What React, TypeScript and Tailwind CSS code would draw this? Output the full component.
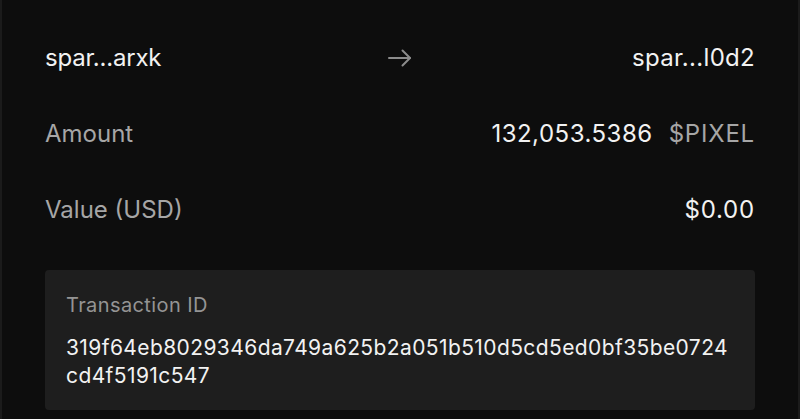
import React from "react";

function Arrow() {
  return (
    <svg width="24" height="18" viewBox="0 0 24 18" fill="none" stroke="#8c8c8c" strokeWidth="2" strokeLinecap="round" strokeLinejoin="round">
      <path d="M1 9h21" />
      <path d="M14.5 1.5 22 9l-7.5 7.5" />
    </svg>
  );
}

function Row({ label, children }: { label: string; children: React.ReactNode }) {
  return (
    <div className="flex h-9 items-center justify-between">
      <span className="text-[#a6a6a6]">{label}</span>
      <div className="flex items-center gap-4">{children}</div>
    </div>
  );
}

export default function App() {
  return (
    <div
      className="h-[419px] w-[800px] overflow-hidden border-x-2 border-[#1b1b1b] bg-[#0d0d0d] px-[43px] pt-10 text-[24px] leading-9 text-[#f2f2f2]"
      style={{ fontFamily: "Inter, 'Liberation Sans', sans-serif" }}
    >
      <div className="grid h-9 grid-cols-[1fr_auto_1fr] items-center">
        <span className="tracking-[-0.2px]">spar...arxk</span>
        <Arrow />
        <span className="text-right tracking-[0.3px]">spar...l0d2</span>
      </div>
      <div className="mt-10 flex flex-col gap-10">
        <Row label="Amount">
          <span className="tracking-[0.5px]">132,053.5386</span>
          <span className="tracking-[0.8px] text-[#a6a6a6]">$PIXEL</span>
        </Row>
        <Row label="Value (USD)">
          <span className="tracking-[0.8px]">$0.00</span>
        </Row>
      </div>
      <div className="mt-[42px] rounded bg-[#1e1e1e] px-[21px] pt-[21px] pb-[20px]">
        <div className="text-[20px] leading-7 tracking-[0.4px] text-[#949494]">Transaction ID</div>
        <div className="mt-[15px] break-all text-[21px] leading-7 tracking-[0.4px]">
          319f64eb8029346da749a625b2a051b510d5cd5ed0bf35be0724cd4f5191c547
        </div>
      </div>
    </div>
  );
}
